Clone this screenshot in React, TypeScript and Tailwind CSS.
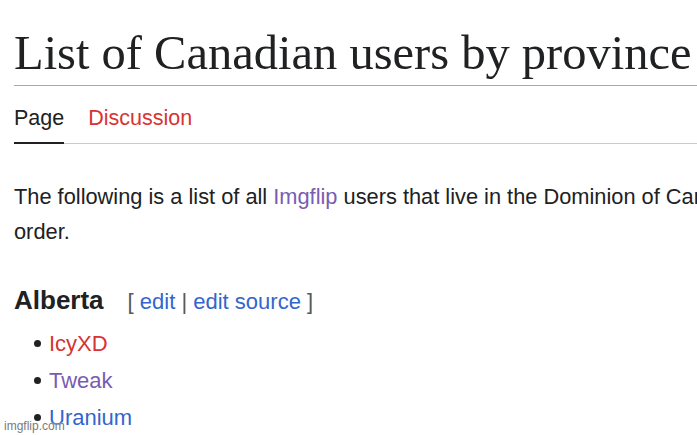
import React from 'react';

const sans = { fontFamily: '"Liberation Sans", Arial, sans-serif' };

export default function App() {
    return (
        <div className="relative w-[697px] h-[435px] overflow-hidden bg-white text-[#202122] font-['Liberation_Sans',Arial,sans-serif]">
            <div className="w-[1000px] pl-[14px] pt-[25px]">
                <h1 className="w-[683px] font-['Liberation_Serif','Times_New_Roman',serif] text-[48.5px] leading-[56px] pb-[4px] border-b border-[#a2a9b1] whitespace-nowrap">
                    List of Canadian users by province
                </h1>

                <div className="w-[683px] mt-[20px] flex items-end border-b border-[#c8ccd1] text-[21.5px] leading-[24px]">
                    <div className="-mb-px pb-[12px] border-b-2 border-[#202122]">Page</div>
                    <div className="ml-[24px] pb-[13px] text-[#d73333]">Discussion</div>
                </div>

                <p className="mt-[35px] text-[21.8px] leading-[35px]">
                    <span className="whitespace-nowrap">
                        The following is a list of all <span className="text-[#795cb2]">Imgflip</span> users that live in the Dominion of Canada in alphabetical
                    </span>
                    <br />
                    order.
                </p>

                <div className="mt-[35px] flex items-baseline">
                    <h2 className="text-[26px] font-bold leading-[32px]">Alberta</h2>
                    <div className="ml-[24px] text-[22px] text-[#54595d]">
                        [ <span className="text-[#3366cc]">edit</span> | <span className="text-[#3366cc]">edit source</span> ]
                    </div>
                </div>

                <ul className="mt-[7px] ml-[20px] text-[22px] leading-[37px]">
                    <li className="flex items-center">
                        <span className="w-[7px] h-[7px] rounded-full bg-[#202122] mr-[8px]" />
                        <span className="text-[#d73333]">IcyXD</span>
                    </li>
                    <li className="flex items-center">
                        <span className="w-[7px] h-[7px] rounded-full bg-[#202122] mr-[8px]" />
                        <span className="text-[#795cb2]">Tweak</span>
                    </li>
                    <li className="flex items-center">
                        <span className="w-[7px] h-[7px] rounded-full bg-[#202122] mr-[8px]" />
                        <span className="text-[#3366cc]">Uranium</span>
                    </li>
                </ul>
            </div>

            <div
                className="absolute left-[4px] bottom-[3px] text-[12px] leading-none text-[#7a7a7a] [text-shadow:0_0_2px_#fff]"
                style={sans}
            >
                imgflip.com
            </div>
        </div>
    );
}
